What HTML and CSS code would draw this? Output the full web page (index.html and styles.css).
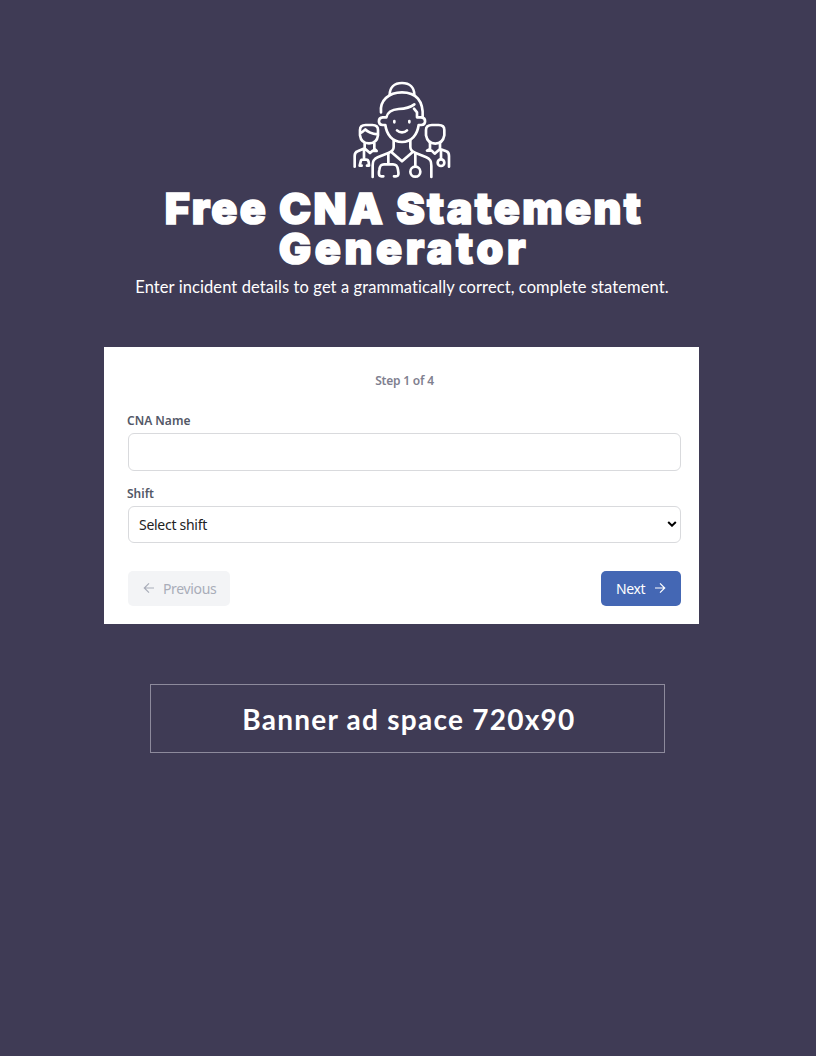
FILE: index.html
```html
<!DOCTYPE html>
<html lang="en">
<head>
<meta charset="utf-8">
<title>Free CNA Statement Generator</title>
<link rel="stylesheet" href="styles.css">
</head>
<body>
<main class="page">
  <header class="hero">
    <svg class="logo" viewBox="0 0 360 345" aria-hidden="true">
      <path d="M143 69C143 46 157 33 180 33C203 33 217 46 217 69"/>
      <path d="M117 121C113 87 139 61 180 61C222 61 245 87 242 136"/>
      <path d="M217 97C204 107 190 110 170 111C148 113 137 119 133 136H122C107 137 107 158 122 159H130C134 188 151 210 180 210C209 210 226 188 230 159H238C253 158 253 137 238 136H225V121L216 110"/>
      <path d="M157 147V151M202 147V151M165 175C173 183 187 183 195 175"/>
      <path d="M155 204V225C155 235 149 239 139 243L107 256C95 261 92 267 92 281V315M205 204V225C205 235 211 239 221 243L253 256C265 261 268 267 268 281V315M147 239L180 268L213 239"/>
      <path d="M139 244V277M124 313H118C109 313 110 302 112 293C114 280 117 277 126 277H153C163 277 166 281 168 293C170 304 171 313 162 313H156M220 244V284"/>
      <circle cx="220" cy="299" r="15"/>
      <path d="M54 190V174C54 163 61 159 71 159H91C101 159 108 163 108 174V190C106 205 96 214 81 214C66 214 56 205 54 190ZM54 184C60 181 66 176 70 172C78 181 91 185 107 187"/>
      <path d="M68 214V229L47 238C41 240 38 244 38 252V284M97 214V230L104 237L92 236L84 243L69 230M66 236V263M59 281H53L57 265C58 263 60 263 63 263H72C77 263 79 265 80 270L81 281H75"/>
      <path d="M252 190V174C252 163 260 159 270 159H290C300 159 307 163 307 174V190C304 207 294 215 280 215C266 215 255 207 252 190Z"/>
      <path d="M264 214V231L255 236L269 236L278 245L294 231V214M294 231L313 238C319 240 321 244 321 252V284M297 235V261"/>
      <circle cx="297" cy="272" r="10"/>
    </svg>
    <h1 class="title"><span class="title-top">Free CNA Statement</span><br><span class="title-bottom">Generator</span></h1>
    <p class="subtitle">Enter incident details to get a grammatically correct, complete statement.</p>
  </header>
  <form class="card">
    <p class="step">Step 1 of 4</p>
    <label class="label label-name" for="name">CNA Name</label>
    <input class="field" id="name" type="text">
    <label class="label label-shift" for="shift">Shift</label>
    <div class="field select" id="shift" role="combobox" tabindex="0">
      <span class="select-text">Select shift</span>
      <svg class="chevron" viewBox="0 0 10 6"><path d="M1.2 1L5 4.7L8.8 1"/></svg>
    </div>
    <div class="actions">
      <button class="btn btn-prev" type="button" disabled>
        <svg class="arrow" viewBox="0 0 12 12"><path d="M11 6H1.5M6 1.3L1.3 6L6 10.7"/></svg>
        <span class="prev-text">Previous</span>
      </button>
      <button class="btn btn-next" type="button">
        <span class="next-text">Next</span>
        <svg class="arrow" viewBox="0 0 12 12"><path d="M1 6H10.5M6 1.3L10.7 6L6 10.7"/></svg>
      </button>
    </div>
  </form>
  <aside class="banner"><span class="banner-text">Banner ad space 720x90</span></aside>
</main>
</body>
</html>
```
FILE: styles.css
```css
* { box-sizing: border-box; }
body { margin: 0; background: #3f3b55; }
.page { min-height: 1056px; padding-top: 72px; }
.hero { display: flex; flex-direction: column; align-items: center; width: 804px; height: 275px; color: #fff; }
.logo { width: 120px; height: 115px; fill: none; stroke: #fff; stroke-width: 8; stroke-linecap: round; stroke-linejoin: round; }
.title { margin: 1px 0 0; padding-left: 4px; font: 900 43px/40px Inter, sans-serif; text-align: center; white-space: nowrap; -webkit-text-stroke: 1.6px #fff; }
.title-top { letter-spacing: 2.3px; }
.title-bottom { letter-spacing: 3.6px; }
.subtitle { margin: 6px 0 0; font: 400 16.5px/26px Lato, sans-serif; letter-spacing: .09px; white-space: nowrap; }
.card { display: flex; flex-direction: column; width: 595px; height: 277px; margin-left: 104px; padding: 25px 17px 0 23px; background: #fff; font-family: "Noto Sans", sans-serif; }
.step { margin: 0 0 22px; font-size: 12px; line-height: 18px; font-weight: 600; color: #80808f; text-align: center; letter-spacing: -.2px; }
.label { height: 18px; font-size: 12px; line-height: 18px; font-weight: 600; color: #535867; }
.label-name { margin-bottom: 3px; }
.label-shift { margin: 14px 0 3px; }
.field { width: 553px; height: 37.5px; margin-left: 1px; border: 1px solid #d9dadd; border-radius: 6px; background: #fff; }
.label-shift + .field { height: 37px; }
.select { display: flex; align-items: center; justify-content: space-between; padding: 0 3px 0 10px; color: #222; font-size: 14px; letter-spacing: -.28px; }
.chevron { width: 10px; height: 6px; fill: none; stroke: #000; stroke-width: 2; }
.actions { display: flex; justify-content: space-between; width: 553px; margin: 28px 0 0 1px; }
.btn { display: flex; align-items: center; height: 35px; border: 0; border-radius: 5px; padding: 0 15px; font: 400 14px "Noto Sans", sans-serif; letter-spacing: -.35px; white-space: nowrap; }
.btn-prev { width: 102px; gap: 8px; background: #f3f4f6; color: #a9adb9; }
.btn-next { width: 80px; gap: 9px; background: #4467b4; color: #fff; }
.arrow { flex: none; width: 12px; height: 12px; fill: none; stroke: currentColor; stroke-width: 1.2; }
.banner { display: flex; align-items: center; justify-content: center; width: 515px; height: 69px; margin: 60px 0 0 150.4px; border: 1px solid #8d8a9c; color: #fff; }
.banner-text { padding-left: 2px; font: 700 28px/34px Lato, sans-serif; letter-spacing: 1.25px; white-space: nowrap; }
```
